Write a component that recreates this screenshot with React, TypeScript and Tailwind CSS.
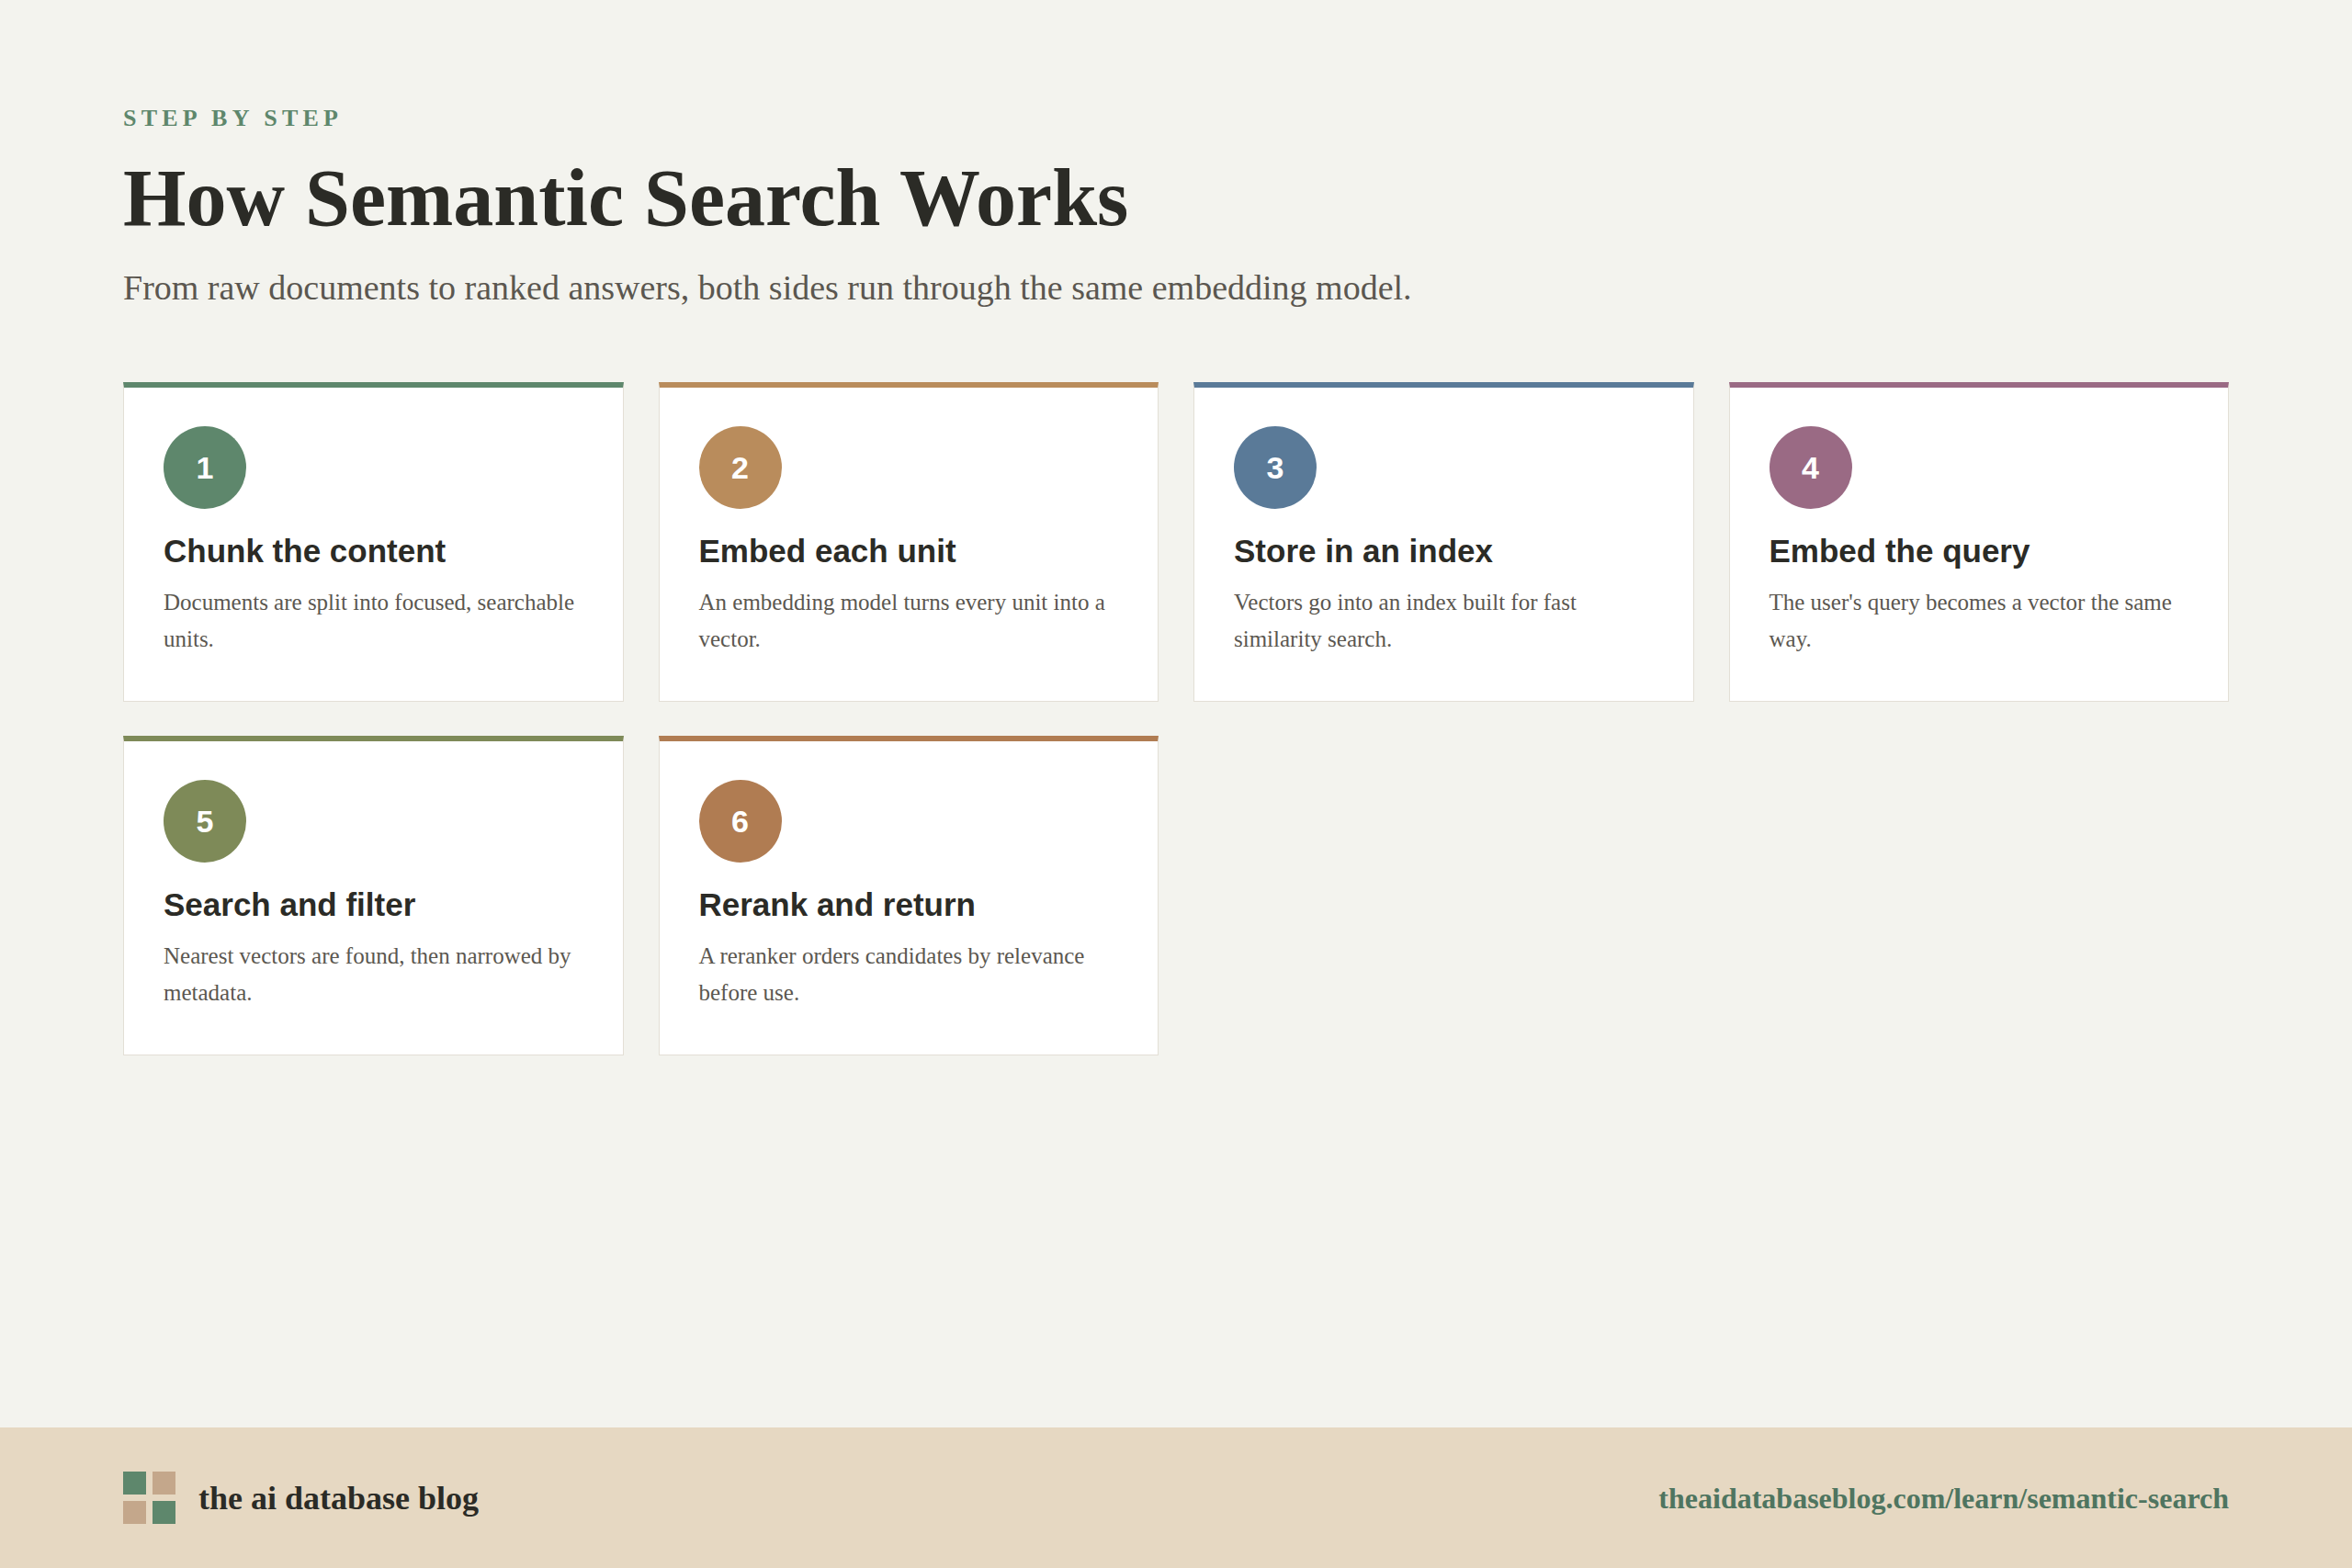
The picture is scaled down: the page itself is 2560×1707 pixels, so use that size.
const serif = { fontFamily: '"Liberation Serif", "Times New Roman", serif' };
const sans = { fontFamily: '"Liberation Sans", Arial, sans-serif' };

const steps = [
  { n: 1, c: "#5e876c", t: "Chunk the content", d: "Documents are split into focused, searchable units." },
  { n: 2, c: "#b98c5c", t: "Embed each unit", d: "An embedding model turns every unit into a vector." },
  { n: 3, c: "#5a7a98", t: "Store in an index", d: "Vectors go into an index built for fast similarity search." },
  { n: 4, c: "#9a6a84", t: "Embed the query", d: "The user's query becomes a vector the same way." },
  { n: 5, c: "#7e8a58", t: "Search and filter", d: "Nearest vectors are found, then narrowed by metadata." },
  { n: 6, c: "#b07c52", t: "Rerank and return", d: "A reranker orders candidates by relevance before use." },
];

export default function App() {
  return (
    <div className="min-h-[1707px] flex flex-col bg-[#f3f3ee]">
      <main className="flex-1 px-[134px] pt-[116px]">
        <div style={serif} className="text-[26px] font-bold tracking-[0.2em] text-[#5e876c] leading-none">STEP BY STEP</div>
        <h1 style={serif} className="mt-[30px] text-[88px] font-bold text-[#2b2b26] leading-none">How Semantic Search Works</h1>
        <p style={serif} className="mt-[34px] text-[38px] text-[#5b5750] leading-none">From raw documents to ranked answers, both sides run through the same embedding model.</p>
        <div className="mt-[84px] grid grid-cols-4 gap-x-[38px] gap-y-[37px]">
          {steps.map((s) => (
            <div key={s.n} className="h-[348px] bg-white border border-[#e3dfd6] border-t-[6px] px-[43px] pt-[42px]" style={{ borderTopColor: s.c }}>
              <div style={{ ...sans, backgroundColor: s.c }} className="w-[90px] h-[90px] rounded-full flex items-center justify-center text-white text-[34px] font-bold">{s.n}</div>
              <div style={sans} className="mt-[24px] text-[35px] font-bold text-[#2b2b26] leading-tight">{s.t}</div>
              <div style={serif} className="mt-[14px] text-[25px] text-[#5b5750] leading-[40px]">{s.d}</div>
            </div>
          ))}
        </div>
      </main>
      <footer className="h-[153px] bg-[#e6d8c2] px-[134px] flex items-center justify-between">
        <div className="flex items-center gap-[25px]">
          <div className="grid grid-cols-2 gap-[7px]">
            <div className="w-[25px] h-[25px] bg-[#5e876c]" />
            <div className="w-[25px] h-[25px] bg-[#c4a78b]" />
            <div className="w-[25px] h-[25px] bg-[#c4a78b]" />
            <div className="w-[25px] h-[25px] bg-[#5e876c]" />
          </div>
          <span style={serif} className="text-[36px] font-bold text-[#2b2b26]">the ai database blog</span>
        </div>
        <span style={serif} className="text-[32px] font-bold text-[#4f7560]">theaidatabaseblog.com/learn/semantic-search</span>
      </footer>
    </div>
  );
}
